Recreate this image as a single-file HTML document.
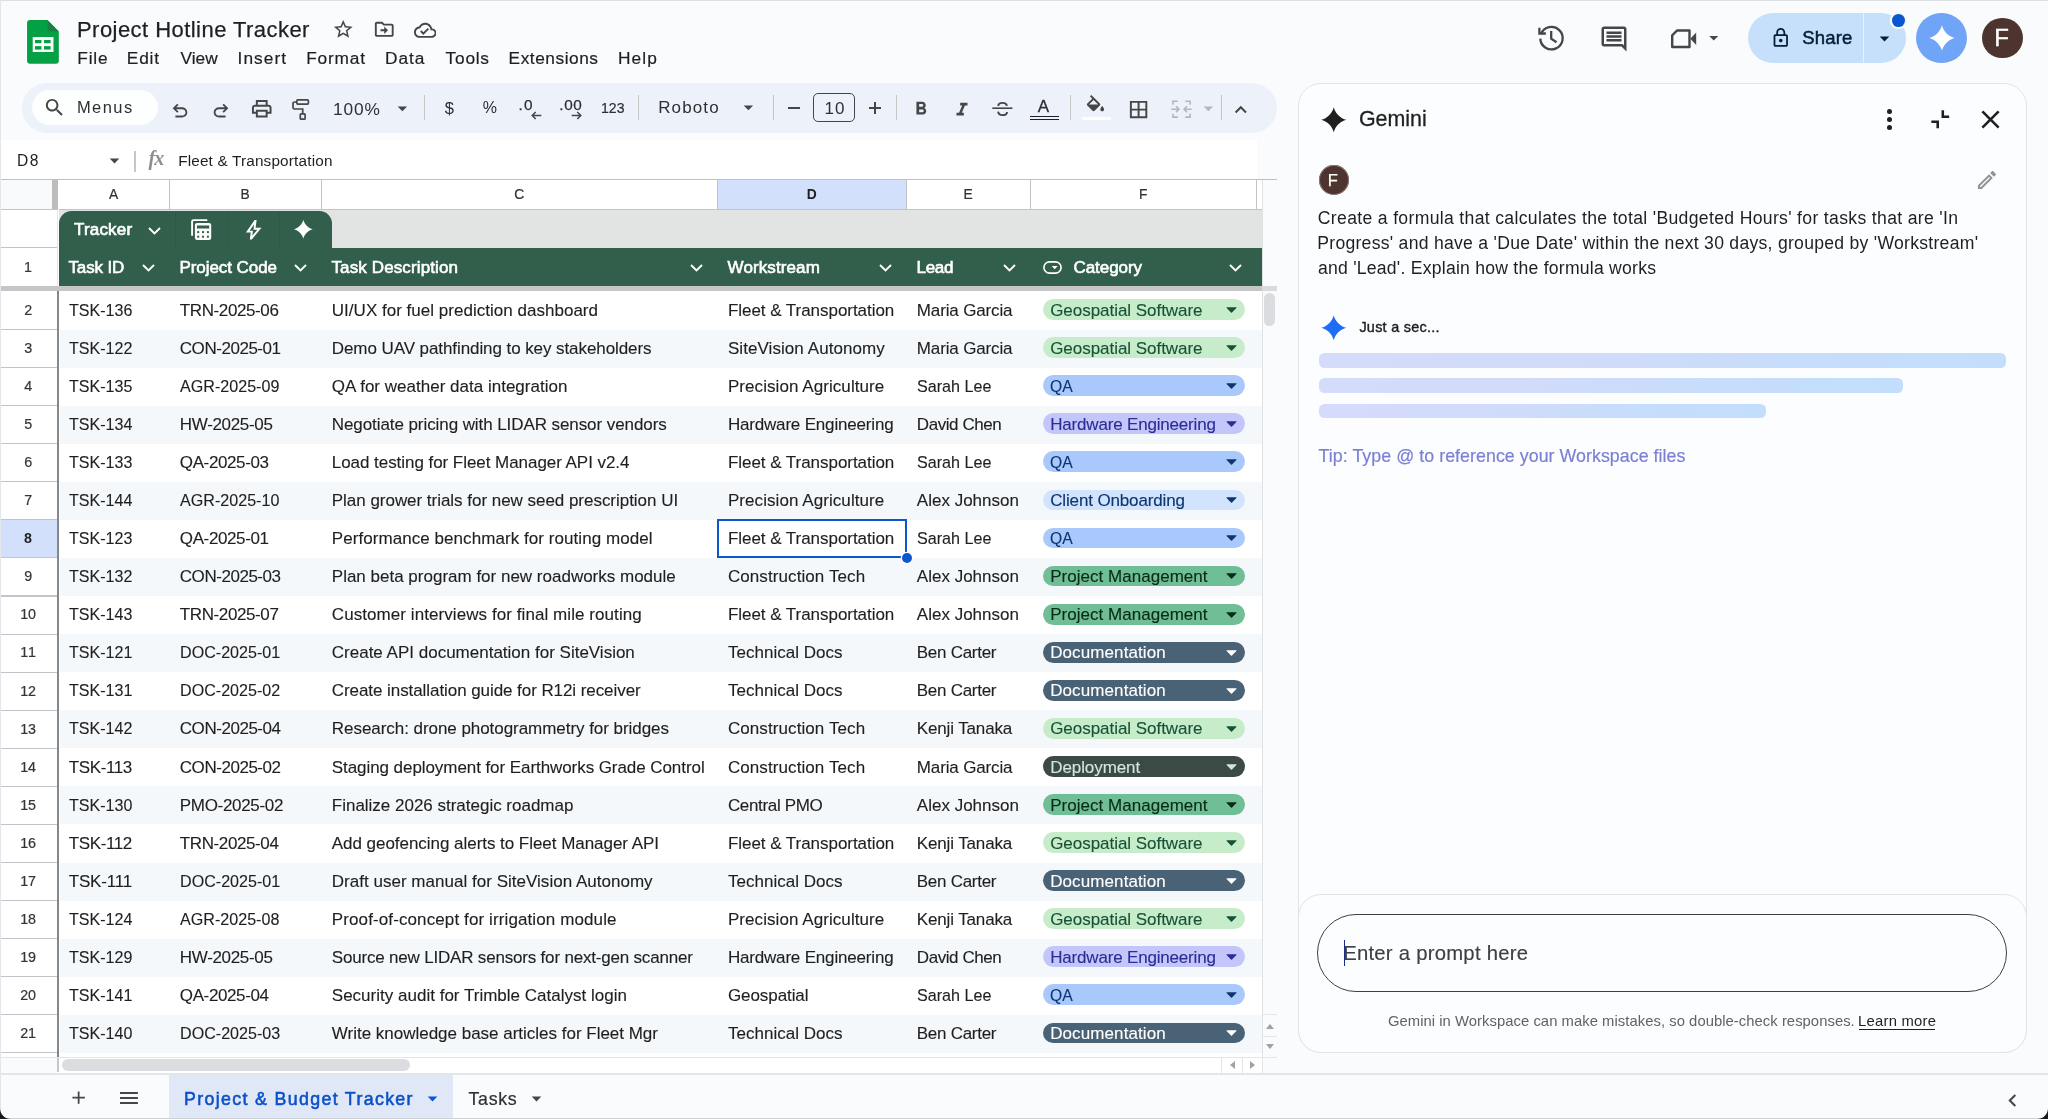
<!DOCTYPE html>
<html lang="en"><head><meta charset="utf-8"><title>Project Hotline Tracker</title>
<style>
html,body{margin:0;padding:0}
body{width:2048px;height:1119px;position:relative;overflow:hidden;background:#f9fbfd;font-family:"Liberation Sans",sans-serif}
.t{position:absolute;white-space:nowrap;line-height:1}
#w{position:absolute;left:0;top:0;width:2048px;height:1119px;will-change:transform}
.b{position:absolute;display:block}
</style></head>
<body>
<div id="w">
<svg class="b" style="left:27.300px;top:19.900px" width="31.900" height="43.700" viewBox="0 0 32 44"><path d="M3 0h17.500L32 11.500V41a3 3 0 0 1-3 3H3a3 3 0 0 1-3-3V3a3 3 0 0 1 3-3z" fill="#06a044"/><path d="M20.500 0L32 11.500h-9a2.500 2.500 0 0 1-2.500-2.500z" fill="#188245"/><rect x="5.700" y="17.200" width="20.900" height="15" fill="#fff"/><rect x="8" y="20.100" width="6.500" height="3.300" fill="#06a044"/><rect x="17.100" y="20.100" width="6.600" height="3.300" fill="#06a044"/><rect x="8" y="26.300" width="6.500" height="3.500" fill="#06a044"/><rect x="17.100" y="26.300" width="6.600" height="3.500" fill="#06a044"/></svg>
<span class="t" style="left:77px;top:19px;font-size:22px;color:#1f1f1f;letter-spacing:0.45px;-webkit-text-stroke:0.25px #1f1f1f;">Project Hotline Tracker</span>
<svg class="b" style="left:332.45px;top:18.35px;" width="22.5" height="22.5" viewBox="0 0 24 24" fill="#444746"><path d="M22 9.24l-7.19-.62L12 2 9.19 8.63 2 9.24l5.46 4.73L5.82 21 12 17.27 18.18 21l-1.63-7.03L22 9.24zM12 15.4l-3.76 2.27 1-4.28-3.32-2.88 4.38-.38L12 6.1l1.71 4.04 4.38.38-3.32 2.88 1 4.28L12 15.4z" /></svg>
<svg class="b" style="left:373.15px;top:18.35px;" width="22.5" height="22.5" viewBox="0 0 24 24" fill="#444746"><path d="M20 6h-8l-2-2H4c-1.1 0-1.99.9-1.99 2L2 18c0 1.1.9 2 2 2h16c1.1 0 2-.9 2-2V8c0-1.1-.9-2-2-2zm0 12H4V6h5.17l2 2H20v10zm-8-1l4-4-4-4v3H8v2h4v3z" /></svg>
<svg class="b" style="left:413.75px;top:18.55px;" width="22.5" height="22.5" viewBox="0 0 24 24" fill="#444746"><path d="M19.35 10.04C18.67 6.59 15.64 4 12 4 9.11 4 6.6 5.64 5.35 8.04 2.34 8.36 0 10.91 0 14c0 3.31 2.69 6 6 6h13c2.76 0 5-2.24 5-5 0-2.64-2.05-4.78-4.65-4.96zM19 18H6c-2.21 0-4-1.79-4-4 0-2.05 1.53-3.76 3.56-3.97l1.07-.11.5-.95C8.08 7.14 9.94 6 12 6c2.62 0 4.88 1.86 5.39 4.43l.3 1.5 1.53.11c1.56.1 2.78 1.41 2.78 2.96 0 1.65-1.35 3-3 3zm-9-3.82l-2.09-2.09L6.5 13.5 10 17l6.01-6.01-1.41-1.41z" /></svg>
<span class="t" style="left:77.18px;top:50px;font-size:17.3px;color:#1f1f1f;letter-spacing:0.9px;-webkit-text-stroke:0.2px #1f1f1f;">File</span>
<span class="t" style="left:126.78px;top:50px;font-size:17.3px;color:#1f1f1f;letter-spacing:0.85px;-webkit-text-stroke:0.2px #1f1f1f;">Edit</span>
<span class="t" style="left:180.42px;top:50px;font-size:17.3px;color:#1f1f1f;letter-spacing:0.02px;-webkit-text-stroke:0.2px #1f1f1f;">View</span>
<span class="t" style="left:237.6px;top:50px;font-size:17.3px;color:#1f1f1f;letter-spacing:1.05px;-webkit-text-stroke:0.2px #1f1f1f;">Insert</span>
<span class="t" style="left:306.18px;top:50px;font-size:17.3px;color:#1f1f1f;letter-spacing:0.83px;-webkit-text-stroke:0.2px #1f1f1f;">Format</span>
<span class="t" style="left:385.08px;top:50px;font-size:17.3px;color:#1f1f1f;letter-spacing:0.96px;-webkit-text-stroke:0.2px #1f1f1f;">Data</span>
<span class="t" style="left:445.61px;top:50px;font-size:17.3px;color:#1f1f1f;letter-spacing:0.76px;-webkit-text-stroke:0.2px #1f1f1f;">Tools</span>
<span class="t" style="left:508.58px;top:50px;font-size:17.3px;color:#1f1f1f;letter-spacing:0.54px;-webkit-text-stroke:0.2px #1f1f1f;">Extensions</span>
<span class="t" style="left:617.88px;top:50px;font-size:17.3px;color:#1f1f1f;letter-spacing:1.16px;-webkit-text-stroke:0.2px #1f1f1f;">Help</span>
<svg class="b" style="left:1536px;top:23px" width="30" height="30" viewBox="0 0 30 30" fill="none" stroke="#444746" stroke-width="2.300"><path d="M5.100 11A11.200 11.200 0 1 1 4.300 15.600"/><path d="M3.400 4.700v5.800h6.500"/><path d="M15.200 8v7.600l5.300 3.600"/></svg>
<svg class="b" style="left:1599.4px;top:23.5px;" width="30" height="30" viewBox="0 0 24 24" fill="#444746"><path d="M21.99 4c0-1.1-.89-2-1.99-2H4c-1.1 0-2 .9-2 2v12c0 1.1.9 2 2 2h14l4 4-.01-18zM20 4v13.17L18.83 16H4V4h16zM6 12h12v2H6zm0-3h12v2H6zm0-3h12v2H6z" /></svg>
<svg class="b" style="left:1668px;top:26px" width="30" height="25" viewBox="0 0 30 25"><path d="M9 4.500h12.500V21H4.200V9.300z" fill="none" stroke="#444746" stroke-width="2.400" stroke-linejoin="round"/><path d="M22.300 12.700l5.900-6.200v12.400z" fill="#444746"/></svg>
<svg class="b" style="left:1702.95px;top:26.65px;" width="21.5" height="21.5" viewBox="0 0 24 24" fill="#444746"><path d="M7 10l5 5 5-5z" /></svg>
<div class="b" style="left:1747.8px;top:12.8px;width:158.1px;height:50.4px;background:#c6e0fb;border-radius:25.200px;"></div>
<div class="b" style="left:1863px;top:12.8px;width:1.2px;height:50.4px;background:#e6f1fd;"></div>
<svg class="b" style="left:1770.15px;top:26.6px;" width="21.5" height="21.5" viewBox="0 0 24 24" fill="#041e36"><path d="M18 8h-1V6c0-2.76-2.24-5-5-5S7 3.24 7 6v2H6c-1.1 0-2 .9-2 2v10c0 1.1.9 2 2 2h12c1.1 0 2-.9 2-2V10c0-1.1-.9-2-2-2zM9 6c0-1.66 1.34-3 3-3s3 1.34 3 3v2H9V6zm9 14H6V10h12v10zm-6-3c1.1 0 2-.9 2-2s-.9-2-2-2-2 .9-2 2 .9 2 2 2z" /></svg>
<span class="t" style="left:1802.36px;top:29px;font-size:18.5px;color:#041e36;letter-spacing:0.17px;-webkit-text-stroke:0.5px #041e36;">Share</span>
<svg class="b" style="left:1872.9px;top:26.9px;" width="23" height="23" viewBox="0 0 24 24" fill="#041e36"><path d="M7 10l5 5 5-5z" /></svg>
<div class="b" style="left:1891.800px;top:13.900px;width:12.800px;height:12.800px;border-radius:50%;background:#0b57d0;box-shadow:0 0 0 2.200px #f6f9fd"></div>
<div class="b" style="left:1916.300px;top:13px;width:50.300px;height:50.300px;border-radius:50%;background:#6fa4f6"></div>
<svg class="b" style="left:1927.55px;top:24.35px;" width="27.9" height="27.9" viewBox="0 0 24 24" fill="#fff"><path d="M12 1C13.200 6.200 17.800 10.800 23 12 17.800 13.200 13.200 17.800 12 23 10.800 17.800 6.200 13.200 1 12 6.200 10.800 10.800 6.200 12 1Z" /></svg>
<div class="b" style="left:1982.100px;top:17.700px;width:40.600px;height:40.600px;border-radius:50%;background:#4e342e"></div>
<span class="t" style="left:1994.13px;top:26px;font-size:24px;color:#fff;-webkit-text-stroke:0.4px #fff;">F</span>
<div class="b" style="left:22px;top:82.5px;width:1254.5px;height:50.5px;background:#edf2fa;border-radius:25.5px;"></div>
<div class="b" style="left:31.5px;top:90.2px;width:126.5px;height:35px;background:#fdfefe;border-radius:17.5px;"></div>
<svg class="b" style="left:43.15px;top:96.05px;" width="23.1" height="23.1" viewBox="0 0 24 24" fill="#444746"><path d="M15.5 14h-.79l-.28-.27C15.41 12.59 16 11.11 16 9.5 16 5.91 13.09 3 9.5 3S3 5.91 3 9.5 5.91 16 9.5 16c1.61 0 3.09-.59 4.23-1.57l.27.28v.79l5 4.99L20.49 19l-4.99-5zm-6 0C7.01 14 5 11.99 5 9.5S7.01 5 9.5 5 14 7.01 14 9.5 11.99 14 9.5 14z" /></svg>
<span class="t" style="left:76.95px;top:99px;font-size:16.5px;color:#2d2f31;letter-spacing:1.43px;">Menus</span>
<svg class="b" style="left:169.3px;top:99.6px;" width="22" height="22" viewBox="0 0 24 24" fill="#444746"><path d="M7 19v-2h7.1q1.575 0 2.738-1T18 13.5t-1.162-2.5T14.1 10H7.8l2.6 2.6L9 14 4 9l5-5 1.4 1.4L7.8 8h6.3q2.425 0 4.163 1.575T20 13.5t-1.737 3.925T14.1 19z" /></svg>
<svg class="b" style="left:209.6px;top:99.6px;transform:scaleX(-1);" width="22" height="22" viewBox="0 0 24 24" fill="#444746"><path d="M7 19v-2h7.1q1.575 0 2.738-1T18 13.5t-1.162-2.5T14.1 10H7.8l2.6 2.6L9 14 4 9l5-5 1.4 1.4L7.8 8h6.3q2.425 0 4.163 1.575T20 13.5t-1.737 3.925T14.1 19z" /></svg>
<svg class="b" style="left:249.65px;top:97.25px;" width="23.5" height="23.5" viewBox="0 0 24 24" fill="#444746"><path d="M19 8h-1V3H6v5H5c-1.66 0-3 1.34-3 3v6h4v4h12v-4h4v-6c0-1.66-1.34-3-3-3zM8 5h8v3H8V5zm8 14H8v-4h8v4zm2-4v-2H6v2H4v-4c0-.55.45-1 1-1h14c.55 0 1 .45 1 1v4h-2z" /></svg>
<svg class="b" style="left:290px;top:97px" width="22" height="25" viewBox="0 0 22 25" fill="none" stroke="#444746" stroke-width="1.700"><rect x="6.800" y="2.900" width="11.600" height="4.200" rx="1"/><path d="M6.800 5H4.600a1.600 1.600 0 0 0-1.600 1.600v3.800A1.600 1.600 0 0 0 4.600 12h8.100v4.600"/><rect x="10.300" y="16.800" width="4.800" height="5.400" rx=".8"/></svg>
<span class="t" style="left:333.08px;top:101px;font-size:17.3px;color:#2d2f31;letter-spacing:0.9px;">100%</span>
<svg class="b" style="left:390.8px;top:96.6px;" width="22.8" height="22.8" viewBox="0 0 24 24" fill="#444746"><path d="M7 10l5 5 5-5z" /></svg>
<div class="b" style="left:423.95px;top:95.3px;width:1.3px;height:25px;background:#c4c7c5;"></div>
<span class="t" style="left:444.71px;top:100px;font-size:16.5px;color:#2d2f31;">$</span>
<span class="t" style="left:482.63px;top:100px;font-size:16px;color:#2d2f31;">%</span>
<span class="t" style="left:518.4px;top:97px;font-size:15.3px;color:#2d2f31;letter-spacing:1.44px;-webkit-text-stroke:0.25px #2d2f31;">.0</span>
<svg class="b" style="left:530.500px;top:110.800px" width="11" height="9" viewBox="0 0 11 9" fill="none" stroke="#444746" stroke-width="1.500"><path d="M10.300 4.500H1.500M4.700 1L1.200 4.500l3.500 3.500"/></svg>
<span class="t" style="left:559.2px;top:97px;font-size:15.3px;color:#2d2f31;letter-spacing:0.71px;-webkit-text-stroke:0.25px #2d2f31;">.00</span>
<svg class="b" style="left:570.500px;top:110.800px" width="11" height="9" viewBox="0 0 11 9" fill="none" stroke="#444746" stroke-width="1.500"><path d="M.7 4.500h8.800M6.300 1l3.500 3.500L6.300 8"/></svg>
<span class="t" style="left:600.64px;top:100px;font-size:15.2px;color:#2d2f31;-webkit-text-stroke:0.2px #2d2f31;transform:scaleX(0.9278);transform-origin:0 0;">123</span>
<div class="b" style="left:638.05px;top:95.3px;width:1.3px;height:25px;background:#c4c7c5;"></div>
<span class="t" style="left:658.21px;top:99px;font-size:17px;color:#2d2f31;letter-spacing:1.12px;">Roboto</span>
<svg class="b" style="left:737.1px;top:95.9px;" width="22.8" height="22.8" viewBox="0 0 24 24" fill="#444746"><path d="M7 10l5 5 5-5z" /></svg>
<div class="b" style="left:772.85px;top:95.3px;width:1.3px;height:25px;background:#c4c7c5;"></div>
<div class="b" style="left:787.7px;top:106.9px;width:12.3px;height:1.7px;background:#444746;"></div>
<div class="b" style="left:813.300px;top:93.300px;width:42.100px;height:29px;border:1.300px solid #444746;border-radius:5px;box-sizing:border-box"></div>
<span class="t" style="left:824.51px;top:100px;font-size:17px;color:#2d2f31;letter-spacing:1.05px;">10</span>
<div class="b" style="left:868.8px;top:107px;width:12.4px;height:1.7px;background:#444746;"></div>
<div class="b" style="left:874.15px;top:101.6px;width:1.7px;height:12.5px;background:#444746;"></div>
<div class="b" style="left:895.75px;top:95.3px;width:1.3px;height:25px;background:#c4c7c5;"></div>
<svg class="b" style="left:909.9px;top:98.4px;" width="22" height="22" viewBox="0 0 24 24" fill="#444746"><path d="M15.6 10.79c.97-.67 1.65-1.77 1.65-2.79 0-2.26-1.75-4-4-4H7v14h7.04c2.09 0 3.71-1.7 3.71-3.79 0-1.52-.86-2.82-2.15-3.42zM10 6.5h3c.83 0 1.5.67 1.5 1.5s-.67 1.5-1.5 1.5h-3v-3zm3.5 9H10v-3h3.5c.83 0 1.5.67 1.5 1.5s-.67 1.5-1.5 1.5z" /></svg>
<svg class="b" style="left:951px;top:98.9px;" width="22" height="22" viewBox="0 0 24 24" fill="#444746"><path d="M10 4v3h2.21l-3.42 8H6v3h8v-3h-2.21l3.42-8H18V4z" /></svg>
<svg class="b" style="left:992px;top:101px" width="21" height="16" viewBox="0 0 21 16" fill="none" stroke="#444746" stroke-width="1.900"><path d="M14.900 4.800C14.600 2.900 13 1.900 10.600 1.900 8 1.900 6.300 3 6.300 4.900"/><path d="M6.100 10.700c.2 2.200 1.900 3.400 4.500 3.400 2.700 0 4.400-1.200 4.400-3.200"/><path d="M.3 7.200h20.100" stroke-width="1.600"/></svg>
<span class="t" style="left:1037.73px;top:98px;font-size:17px;color:#2d2f31;-webkit-text-stroke:0.3px #2d2f31;">A</span>
<div class="b" style="left:1030px;top:115.6px;width:28.9px;height:1.6px;background:#1f1f1f;"></div>
<div class="b" style="left:1030px;top:118.7px;width:28.9px;height:1.6px;background:#1f1f1f;"></div>
<div class="b" style="left:1069.75px;top:95.3px;width:1.3px;height:25px;background:#c4c7c5;"></div>
<svg class="b" style="left:1084px;top:95.1px;" width="23" height="23" viewBox="0 0 24 24" fill="#444746"><path d="M16.56 8.94L7.62 0 6.21 1.41l2.38 2.38-5.15 5.15c-.59.59-.59 1.54 0 2.12l5.5 5.5c.29.29.68.44 1.06.44s.77-.15 1.06-.44l5.5-5.5c.59-.58.59-1.53 0-2.12zM5.21 10L10 5.21 14.79 10H5.21zM19 11.5s-2 2.17-2 3.5c0 1.1.9 2 2 2s2-.9 2-2c0-1.33-2-3.5-2-3.5z" /></svg>
<div class="b" style="left:1082px;top:116.6px;width:28.5px;height:3.8px;background:#fdfefe;"></div>
<svg class="b" style="left:1126.9px;top:97.6px;" width="23.2" height="23.2" viewBox="0 0 24 24" fill="#444746"><path d="M3 3v18h18V3H3zm8 16H5v-6h6v6zm0-8H5V5h6v6zm8 8h-6v-6h6v6zm0-8h-6V5h6v6z" /></svg>
<svg class="b" style="left:1170.700px;top:100px" width="21" height="18.500" viewBox="0 0 21 18.500" fill="none" stroke="#b3b7bb" stroke-width="1.600"><path d="M6.800 1.300H1.900v3.400M1.900 13.700v3.400h4.900M14.200 1.300h4.900v3.400M19.100 13.700v3.400h-4.900"/><path d="M.3 9.200h7.300M5 6.300l2.900 2.900L5 12.100M20.700 9.200h-7.300M16 6.300l-2.900 2.900 2.900 2.900"/></svg>
<svg class="b" style="left:1196.6px;top:96.9px;" width="22.8" height="22.8" viewBox="0 0 24 24" fill="#b3b7bb"><path d="M7 10l5 5 5-5z" /></svg>
<div class="b" style="left:1220.65px;top:95.3px;width:1.3px;height:25px;background:#c4c7c5;"></div>
<svg class="b" style="left:1229.2px;top:97.6px;" width="23.6" height="23.6" viewBox="0 0 24 24" fill="#444746"><path d="M12 8l-6 6 1.41 1.41L12 10.83l4.59 4.58L18 14z" /></svg>
<div class="b" style="left:0px;top:140.3px;width:1257.2px;height:39.2px;background:#fff;"></div>
<span class="t" style="left:17.02px;top:153px;font-size:15.6px;color:#1f1f1f;letter-spacing:1.52px;">D8</span>
<svg class="b" style="left:102.7px;top:149.1px;" width="23" height="23" viewBox="0 0 24 24" fill="#444746"><path d="M7 10l5 5 5-5z" /></svg>
<div class="b" style="left:134.4px;top:151.3px;width:1.3px;height:20.5px;background:#c7c7c7;"></div>
<span class="t" style="left:148.600px;top:148px;font-size:20px;color:#8a8f94;font-family:'Liberation Serif',serif;font-style:italic;font-weight:700;letter-spacing:-1px">fx</span>
<span class="t" style="left:178.14px;top:153px;font-size:15.3px;color:#1f1f1f;letter-spacing:0.18px;">Fleet &amp; Transportation</span>
<div class="b" style="left:0px;top:179px;width:1276.5px;height:895px;background:#fff;"></div>
<div class="b" style="left:0px;top:179px;width:1276.5px;height:1.2px;background:#bdbfc2;"></div>
<div class="b" style="left:0px;top:180px;width:52px;height:29.5px;background:#f8fafc;"></div>
<div class="b" style="left:52.2px;top:180px;width:5.8px;height:29.5px;background:#bdbdbd;"></div>
<div class="b" style="left:169px;top:180px;width:1.2px;height:29.5px;background:#c2c5c8;"></div>
<span class="t" style="left:109.1px;top:188px;font-size:13.8px;color:#2f3133;-webkit-text-stroke:0.2px #2f3133;">A</span>
<div class="b" style="left:321px;top:180px;width:1.2px;height:29.5px;background:#c2c5c8;"></div>
<span class="t" style="left:240.6px;top:188px;font-size:13.8px;color:#2f3133;-webkit-text-stroke:0.2px #2f3133;">B</span>
<div class="b" style="left:717.1px;top:180px;width:1.2px;height:29.5px;background:#c2c5c8;"></div>
<span class="t" style="left:514.27px;top:188px;font-size:13.8px;color:#2f3133;-webkit-text-stroke:0.2px #2f3133;">C</span>
<div class="b" style="left:717.6px;top:180px;width:188.9px;height:29.5px;background:#d3e0fb;"></div>
<div class="b" style="left:906px;top:180px;width:1.2px;height:29.5px;background:#c2c5c8;"></div>
<span class="t" style="left:806.77px;top:188px;font-size:13.8px;color:#1f1f1f;font-weight:700;">D</span>
<div class="b" style="left:1030px;top:180px;width:1.2px;height:29.5px;background:#c2c5c8;"></div>
<span class="t" style="left:963.6px;top:188px;font-size:13.8px;color:#2f3133;-webkit-text-stroke:0.2px #2f3133;">E</span>
<div class="b" style="left:1256px;top:180px;width:1.2px;height:29.5px;background:#c2c5c8;"></div>
<span class="t" style="left:1138.99px;top:188px;font-size:13.8px;color:#2f3133;-webkit-text-stroke:0.2px #2f3133;">F</span>
<div class="b" style="left:1262px;top:180px;width:14.5px;height:894px;background:#f9fbfd;"></div>
<div class="b" style="left:1261.5px;top:180px;width:1px;height:877px;background:#dfe1e4;"></div>
<div class="b" style="left:58.5px;top:209.2px;width:1203px;height:1.2px;background:#c2c5c8;"></div>
<div class="b" style="left:58.5px;top:210.4px;width:1203px;height:37.6px;background:#e2e4e3;"></div>
<div class="b" style="left:0px;top:209.2px;width:57.5px;height:1.1px;background:#c2c5c8;"></div>
<div class="b" style="left:0px;top:247.2px;width:57.5px;height:1.1px;background:#c2c5c8;"></div>
<span class="t" style="left:24.12px;top:260px;font-size:14.3px;color:#333537;-webkit-text-stroke:0.2px #333537;">1</span>
<div class="b" style="left:58.5px;top:211px;width:273px;height:38px;background:#315f4b;border-radius:12.500px 12.500px 0 0;"></div>
<div class="b" style="left:174.5px;top:212px;width:1.2px;height:36px;background:#2b5a47;"></div>
<div class="b" style="left:226.7px;top:212px;width:1.2px;height:36px;background:#2b5a47;"></div>
<div class="b" style="left:278.8px;top:212px;width:1.2px;height:36px;background:#2b5a47;"></div>
<span class="t" style="left:74.02px;top:221px;font-size:17px;color:#fff;letter-spacing:0.18px;-webkit-text-stroke:0.65px #fff;">Tracker</span>
<svg class="b" style="left:146.6px;top:226.2px" width="15" height="10" viewBox="0 0 15 10"><path d="M2 2l5.5 5.500L13 2" fill="none" stroke="#fff" stroke-width="1.9"/></svg>
<svg class="b" style="left:190px;top:218px" width="23" height="24" viewBox="0 0 23 24"><path d="M2.100 17.800V3.600a1.500 1.500 0 0 1 1.500-1.500h13.700" fill="none" stroke="#fff" stroke-width="1.900"/><rect x="4.900" y="4.900" width="16.300" height="17.100" rx="2.200" fill="#fff"/><rect x="6.900" y="7.500" width="12.300" height="3" fill="#315f4b"/><rect x="7.2" y="13.1" width="2" height="2" fill="#315f4b"/><rect x="12.05" y="13.1" width="2" height="2" fill="#315f4b"/><rect x="16.9" y="13.1" width="2" height="2" fill="#315f4b"/><rect x="7.2" y="17.7" width="2" height="2" fill="#315f4b"/><rect x="12.05" y="17.7" width="2" height="2" fill="#315f4b"/><rect x="16.9" y="17.7" width="2" height="2" fill="#315f4b"/></svg>
<svg class="b" style="left:241.5px;top:218.1px;" width="23.4" height="23.4" viewBox="0 -960 960 960" fill="#fff"><path d="m422-232 207-248H469l29-227-185 267h139l-30 208ZM320-80l40-280H160l360-520h80l-40 320h240L400-80h-80Z" /></svg>
<svg class="b" style="left:293.25px;top:219.25px;" width="20.7" height="20.7" viewBox="0 0 24 24" fill="#fff"><path d="M12 1C13.200 6.200 17.800 10.800 23 12 17.800 13.200 13.200 17.800 12 23 10.800 17.800 6.200 13.200 1 12 6.200 10.800 10.800 6.200 12 1Z" /></svg>
<div class="b" style="left:58.5px;top:248px;width:1203px;height:38.5px;background:#315f4b;"></div>
<span class="t" style="left:68.5px;top:259px;font-size:17px;color:#fff;letter-spacing:-0.16px;-webkit-text-stroke:0.6px #fff;">Task ID</span>
<svg class="b" style="left:140.8px;top:263.2px" width="15" height="10" viewBox="0 0 15 10"><path d="M2 2l5.5 5.500L13 2" fill="none" stroke="#fff" stroke-width="1.9"/></svg>
<span class="t" style="left:179.5px;top:259px;font-size:17px;color:#fff;letter-spacing:-0.07px;-webkit-text-stroke:0.6px #fff;">Project Code</span>
<svg class="b" style="left:293.2px;top:263.2px" width="15" height="10" viewBox="0 0 15 10"><path d="M2 2l5.5 5.500L13 2" fill="none" stroke="#fff" stroke-width="1.9"/></svg>
<span class="t" style="left:331.5px;top:259px;font-size:17px;color:#fff;letter-spacing:0.12px;-webkit-text-stroke:0.6px #fff;">Task Description</span>
<svg class="b" style="left:688.5px;top:263.2px" width="15" height="10" viewBox="0 0 15 10"><path d="M2 2l5.5 5.500L13 2" fill="none" stroke="#fff" stroke-width="1.9"/></svg>
<span class="t" style="left:727.6px;top:259px;font-size:17px;color:#fff;letter-spacing:0.1px;-webkit-text-stroke:0.6px #fff;">Workstream</span>
<svg class="b" style="left:878px;top:263.2px" width="15" height="10" viewBox="0 0 15 10"><path d="M2 2l5.5 5.500L13 2" fill="none" stroke="#fff" stroke-width="1.9"/></svg>
<span class="t" style="left:916.5px;top:259px;font-size:17px;color:#fff;letter-spacing:-0.28px;-webkit-text-stroke:0.6px #fff;">Lead</span>
<svg class="b" style="left:1002px;top:263.2px" width="15" height="10" viewBox="0 0 15 10"><path d="M2 2l5.5 5.500L13 2" fill="none" stroke="#fff" stroke-width="1.9"/></svg>
<svg class="b" style="left:1042.500px;top:260.500px" width="19" height="13" viewBox="0 0 19 13"><rect x=".9" y=".9" width="17.200" height="11.200" rx="5.600" fill="none" stroke="#fff" stroke-width="1.600"/><path d="M8.700 5l3 3.200 3-3.200z" fill="#fff"/></svg>
<span class="t" style="left:1073.5px;top:259px;font-size:17px;color:#fff;letter-spacing:-0.06px;-webkit-text-stroke:0.6px #fff;">Category</span>
<svg class="b" style="left:1228px;top:263.2px" width="15" height="10" viewBox="0 0 15 10"><path d="M2 2l5.5 5.500L13 2" fill="none" stroke="#fff" stroke-width="1.9"/></svg>
<div class="b" style="left:0px;top:286.4px;width:1276.5px;height:5px;background:#c4c6c8;"></div>
<div class="b" style="left:1262px;top:286.4px;width:14.5px;height:5px;background:#d9dbdd;"></div>
<div class="b" style="left:0px;top:328.97px;width:57.4px;height:1.1px;background:#c2c5c8;"></div>
<span class="t" style="left:24.17px;top:303px;font-size:14.3px;color:#333537;-webkit-text-stroke:0.2px #333537;">2</span>
<span class="t" style="left:68.8px;top:302px;font-size:17px;color:#1f1f1f;-webkit-text-stroke:0.12px #1f1f1f;transform:scaleX(0.9442);transform-origin:0 0;">TSK-136</span>
<span class="t" style="left:179.8px;top:302px;font-size:17px;color:#1f1f1f;letter-spacing:-0.39px;-webkit-text-stroke:0.12px #1f1f1f;">TRN-2025-06</span>
<span class="t" style="left:331.8px;top:302px;font-size:17px;color:#1f1f1f;letter-spacing:0.02px;-webkit-text-stroke:0.12px #1f1f1f;">UI/UX for fuel prediction dashboard</span>
<span class="t" style="left:727.9px;top:302px;font-size:17px;color:#1f1f1f;letter-spacing:-0.04px;-webkit-text-stroke:0.12px #1f1f1f;">Fleet &amp; Transportation</span>
<span class="t" style="left:916.8px;top:302px;font-size:17px;color:#1f1f1f;letter-spacing:-0.14px;-webkit-text-stroke:0.12px #1f1f1f;">Maria Garcia</span>
<div class="b" style="left:1043.2px;top:299.2px;width:201.6px;height:20.8px;background:#c6ecca;border-radius:10.400px;"></div>
<span class="t" style="left:1050.2px;top:302px;font-size:17px;color:#175236;letter-spacing:-0.04px;-webkit-text-stroke:0.12px #175236;">Geospatial Software</span>
<svg class="b" style="left:1225.500px;top:307px" width="11" height="6" viewBox="0 0 11 6"><path d="M.9.300h9.200q.8 0 .3.600L6 5.500q-.5.500-1 0L.6.900Q.1.300.9.300z" fill="#175236"/></svg>
<div class="b" style="left:59.5px;top:329.57px;width:1202px;height:38.07px;background:#f5f8fb;"></div>
<div class="b" style="left:0px;top:367.04px;width:57.4px;height:1.1px;background:#c2c5c8;"></div>
<span class="t" style="left:24.17px;top:341px;font-size:14.3px;color:#333537;-webkit-text-stroke:0.2px #333537;">3</span>
<span class="t" style="left:68.8px;top:340px;font-size:17px;color:#1f1f1f;-webkit-text-stroke:0.12px #1f1f1f;transform:scaleX(0.9442);transform-origin:0 0;">TSK-122</span>
<span class="t" style="left:179.8px;top:340px;font-size:17px;color:#1f1f1f;letter-spacing:-0.46px;-webkit-text-stroke:0.12px #1f1f1f;">CON-2025-01</span>
<span class="t" style="left:331.8px;top:340px;font-size:17px;color:#1f1f1f;letter-spacing:-0.08px;-webkit-text-stroke:0.12px #1f1f1f;">Demo UAV pathfinding to key stakeholders</span>
<span class="t" style="left:727.9px;top:340px;font-size:17px;color:#1f1f1f;letter-spacing:0.07px;-webkit-text-stroke:0.12px #1f1f1f;">SiteVision Autonomy</span>
<span class="t" style="left:916.8px;top:340px;font-size:17px;color:#1f1f1f;letter-spacing:-0.14px;-webkit-text-stroke:0.12px #1f1f1f;">Maria Garcia</span>
<div class="b" style="left:1043.2px;top:337.27px;width:201.6px;height:20.8px;background:#c6ecca;border-radius:10.400px;"></div>
<span class="t" style="left:1050.2px;top:340px;font-size:17px;color:#175236;letter-spacing:-0.04px;-webkit-text-stroke:0.12px #175236;">Geospatial Software</span>
<svg class="b" style="left:1225.500px;top:345.07px" width="11" height="6" viewBox="0 0 11 6"><path d="M.9.300h9.200q.8 0 .3.600L6 5.500q-.5.500-1 0L.6.900Q.1.300.9.300z" fill="#175236"/></svg>
<div class="b" style="left:0px;top:405.11px;width:57.4px;height:1.1px;background:#c2c5c8;"></div>
<span class="t" style="left:24.17px;top:379px;font-size:14.3px;color:#333537;-webkit-text-stroke:0.2px #333537;">4</span>
<span class="t" style="left:68.8px;top:378px;font-size:17px;color:#1f1f1f;-webkit-text-stroke:0.12px #1f1f1f;transform:scaleX(0.9442);transform-origin:0 0;">TSK-135</span>
<span class="t" style="left:179.8px;top:378px;font-size:17px;color:#1f1f1f;-webkit-text-stroke:0.12px #1f1f1f;transform:scaleX(0.9474);transform-origin:0 0;">AGR-2025-09</span>
<span class="t" style="left:331.8px;top:378px;font-size:17px;color:#1f1f1f;letter-spacing:0.01px;-webkit-text-stroke:0.12px #1f1f1f;">QA for weather data integration</span>
<span class="t" style="left:727.9px;top:378px;font-size:17px;color:#1f1f1f;letter-spacing:0.07px;-webkit-text-stroke:0.12px #1f1f1f;">Precision Agriculture</span>
<span class="t" style="left:916.8px;top:378px;font-size:17px;color:#1f1f1f;-webkit-text-stroke:0.12px #1f1f1f;transform:scaleX(0.9494);transform-origin:0 0;">Sarah Lee</span>
<div class="b" style="left:1043.2px;top:375.34px;width:201.6px;height:20.8px;background:#a9c8fb;border-radius:10.400px;"></div>
<span class="t" style="left:1050.2px;top:378px;font-size:17px;color:#0b3672;-webkit-text-stroke:0.12px #0b3672;transform:scaleX(0.9238);transform-origin:0 0;">QA</span>
<svg class="b" style="left:1225.500px;top:383.14px" width="11" height="6" viewBox="0 0 11 6"><path d="M.9.300h9.200q.8 0 .3.600L6 5.500q-.5.500-1 0L.6.900Q.1.300.9.300z" fill="#0b3672"/></svg>
<div class="b" style="left:59.5px;top:405.71px;width:1202px;height:38.07px;background:#f5f8fb;"></div>
<div class="b" style="left:0px;top:443.18px;width:57.4px;height:1.1px;background:#c2c5c8;"></div>
<span class="t" style="left:24.17px;top:417px;font-size:14.3px;color:#333537;-webkit-text-stroke:0.2px #333537;">5</span>
<span class="t" style="left:68.8px;top:416px;font-size:17px;color:#1f1f1f;-webkit-text-stroke:0.12px #1f1f1f;transform:scaleX(0.9442);transform-origin:0 0;">TSK-134</span>
<span class="t" style="left:179.8px;top:416px;font-size:17px;color:#1f1f1f;letter-spacing:-0.33px;-webkit-text-stroke:0.12px #1f1f1f;">HW-2025-05</span>
<span class="t" style="left:331.8px;top:416px;font-size:17px;color:#1f1f1f;letter-spacing:-0.08px;-webkit-text-stroke:0.12px #1f1f1f;">Negotiate pricing with LIDAR sensor vendors</span>
<span class="t" style="left:727.9px;top:416px;font-size:17px;color:#1f1f1f;letter-spacing:-0.18px;-webkit-text-stroke:0.12px #1f1f1f;">Hardware Engineering</span>
<span class="t" style="left:916.8px;top:416px;font-size:17px;color:#1f1f1f;letter-spacing:-0.43px;-webkit-text-stroke:0.12px #1f1f1f;">David Chen</span>
<div class="b" style="left:1043.2px;top:413.41px;width:201.6px;height:20.8px;background:#c4c6fb;border-radius:10.400px;"></div>
<span class="t" style="left:1050.2px;top:416px;font-size:17px;color:#2a2d94;letter-spacing:-0.18px;-webkit-text-stroke:0.12px #2a2d94;">Hardware Engineering</span>
<svg class="b" style="left:1225.500px;top:421.21px" width="11" height="6" viewBox="0 0 11 6"><path d="M.9.300h9.200q.8 0 .3.600L6 5.500q-.5.500-1 0L.6.900Q.1.300.9.300z" fill="#2a2d94"/></svg>
<div class="b" style="left:0px;top:481.25px;width:57.4px;height:1.1px;background:#c2c5c8;"></div>
<span class="t" style="left:24.17px;top:455px;font-size:14.3px;color:#333537;-webkit-text-stroke:0.2px #333537;">6</span>
<span class="t" style="left:68.8px;top:454px;font-size:17px;color:#1f1f1f;-webkit-text-stroke:0.12px #1f1f1f;transform:scaleX(0.9442);transform-origin:0 0;">TSK-133</span>
<span class="t" style="left:179.8px;top:454px;font-size:17px;color:#1f1f1f;letter-spacing:-0.38px;-webkit-text-stroke:0.12px #1f1f1f;">QA-2025-03</span>
<span class="t" style="left:331.8px;top:454px;font-size:17px;color:#1f1f1f;letter-spacing:-0.05px;-webkit-text-stroke:0.12px #1f1f1f;">Load testing for Fleet Manager API v2.4</span>
<span class="t" style="left:727.9px;top:454px;font-size:17px;color:#1f1f1f;letter-spacing:-0.04px;-webkit-text-stroke:0.12px #1f1f1f;">Fleet &amp; Transportation</span>
<span class="t" style="left:916.8px;top:454px;font-size:17px;color:#1f1f1f;-webkit-text-stroke:0.12px #1f1f1f;transform:scaleX(0.9494);transform-origin:0 0;">Sarah Lee</span>
<div class="b" style="left:1043.2px;top:451.48px;width:201.6px;height:20.8px;background:#a9c8fb;border-radius:10.400px;"></div>
<span class="t" style="left:1050.2px;top:454px;font-size:17px;color:#0b3672;-webkit-text-stroke:0.12px #0b3672;transform:scaleX(0.9238);transform-origin:0 0;">QA</span>
<svg class="b" style="left:1225.500px;top:459.28px" width="11" height="6" viewBox="0 0 11 6"><path d="M.9.300h9.200q.8 0 .3.600L6 5.500q-.5.500-1 0L.6.900Q.1.300.9.300z" fill="#0b3672"/></svg>
<div class="b" style="left:59.5px;top:481.85px;width:1202px;height:38.07px;background:#f5f8fb;"></div>
<div class="b" style="left:0px;top:519.32px;width:57.4px;height:1.1px;background:#c2c5c8;"></div>
<span class="t" style="left:24.17px;top:493px;font-size:14.3px;color:#333537;-webkit-text-stroke:0.2px #333537;">7</span>
<span class="t" style="left:68.8px;top:492px;font-size:17px;color:#1f1f1f;-webkit-text-stroke:0.12px #1f1f1f;transform:scaleX(0.9442);transform-origin:0 0;">TSK-144</span>
<span class="t" style="left:179.8px;top:492px;font-size:17px;color:#1f1f1f;-webkit-text-stroke:0.12px #1f1f1f;transform:scaleX(0.9474);transform-origin:0 0;">AGR-2025-10</span>
<span class="t" style="left:331.8px;top:492px;font-size:17px;color:#1f1f1f;letter-spacing:-0.03px;-webkit-text-stroke:0.12px #1f1f1f;">Plan grower trials for new seed prescription UI</span>
<span class="t" style="left:727.9px;top:492px;font-size:17px;color:#1f1f1f;letter-spacing:0.07px;-webkit-text-stroke:0.12px #1f1f1f;">Precision Agriculture</span>
<span class="t" style="left:916.8px;top:492px;font-size:17px;color:#1f1f1f;letter-spacing:0.01px;-webkit-text-stroke:0.12px #1f1f1f;">Alex Johnson</span>
<div class="b" style="left:1043.2px;top:489.55px;width:201.6px;height:20.8px;background:#d2e3fd;border-radius:10.400px;"></div>
<span class="t" style="left:1050.2px;top:492px;font-size:17px;color:#0b3672;letter-spacing:-0.14px;-webkit-text-stroke:0.12px #0b3672;">Client Onboarding</span>
<svg class="b" style="left:1225.500px;top:497.35px" width="11" height="6" viewBox="0 0 11 6"><path d="M.9.300h9.200q.8 0 .3.600L6 5.500q-.5.500-1 0L.6.900Q.1.300.9.300z" fill="#0b3672"/></svg>
<div class="b" style="left:0px;top:519.92px;width:57.4px;height:38.07px;background:#d3e0fb;"></div>
<div class="b" style="left:0px;top:557.39px;width:57.4px;height:1.1px;background:#c2c5c8;"></div>
<span class="t" style="left:24.09px;top:531px;font-size:14.3px;color:#1f1f1f;font-weight:700;">8</span>
<span class="t" style="left:68.8px;top:530px;font-size:17px;color:#1f1f1f;-webkit-text-stroke:0.12px #1f1f1f;transform:scaleX(0.9442);transform-origin:0 0;">TSK-123</span>
<span class="t" style="left:179.8px;top:530px;font-size:17px;color:#1f1f1f;letter-spacing:-0.38px;-webkit-text-stroke:0.12px #1f1f1f;">QA-2025-01</span>
<span class="t" style="left:331.8px;top:530px;font-size:17px;color:#1f1f1f;letter-spacing:0.06px;-webkit-text-stroke:0.12px #1f1f1f;">Performance benchmark for routing model</span>
<span class="t" style="left:727.9px;top:530px;font-size:17px;color:#1f1f1f;letter-spacing:-0.04px;-webkit-text-stroke:0.12px #1f1f1f;">Fleet &amp; Transportation</span>
<span class="t" style="left:916.8px;top:530px;font-size:17px;color:#1f1f1f;-webkit-text-stroke:0.12px #1f1f1f;transform:scaleX(0.9494);transform-origin:0 0;">Sarah Lee</span>
<div class="b" style="left:1043.2px;top:527.62px;width:201.6px;height:20.8px;background:#a9c8fb;border-radius:10.400px;"></div>
<span class="t" style="left:1050.2px;top:530px;font-size:17px;color:#0b3672;-webkit-text-stroke:0.12px #0b3672;transform:scaleX(0.9238);transform-origin:0 0;">QA</span>
<svg class="b" style="left:1225.500px;top:535.42px" width="11" height="6" viewBox="0 0 11 6"><path d="M.9.300h9.200q.8 0 .3.600L6 5.500q-.5.500-1 0L.6.900Q.1.300.9.300z" fill="#0b3672"/></svg>
<div class="b" style="left:59.5px;top:557.99px;width:1202px;height:38.07px;background:#f5f8fb;"></div>
<div class="b" style="left:0px;top:595.46px;width:57.4px;height:1.1px;background:#c2c5c8;"></div>
<span class="t" style="left:24.17px;top:569px;font-size:14.3px;color:#333537;-webkit-text-stroke:0.2px #333537;">9</span>
<span class="t" style="left:68.8px;top:568px;font-size:17px;color:#1f1f1f;-webkit-text-stroke:0.12px #1f1f1f;transform:scaleX(0.9442);transform-origin:0 0;">TSK-132</span>
<span class="t" style="left:179.8px;top:568px;font-size:17px;color:#1f1f1f;letter-spacing:-0.46px;-webkit-text-stroke:0.12px #1f1f1f;">CON-2025-03</span>
<span class="t" style="left:331.8px;top:568px;font-size:17px;color:#1f1f1f;letter-spacing:-0px;-webkit-text-stroke:0.12px #1f1f1f;">Plan beta program for new roadworks module</span>
<span class="t" style="left:727.9px;top:568px;font-size:17px;color:#1f1f1f;letter-spacing:0.09px;-webkit-text-stroke:0.12px #1f1f1f;">Construction Tech</span>
<span class="t" style="left:916.8px;top:568px;font-size:17px;color:#1f1f1f;letter-spacing:0.01px;-webkit-text-stroke:0.12px #1f1f1f;">Alex Johnson</span>
<div class="b" style="left:1043.2px;top:565.69px;width:201.6px;height:20.8px;background:#70be95;border-radius:10.400px;"></div>
<span class="t" style="left:1050.2px;top:568px;font-size:17px;color:#082a18;letter-spacing:0.03px;-webkit-text-stroke:0.12px #082a18;">Project Management</span>
<svg class="b" style="left:1225.500px;top:573.49px" width="11" height="6" viewBox="0 0 11 6"><path d="M.9.300h9.200q.8 0 .3.600L6 5.500q-.5.500-1 0L.6.900Q.1.300.9.300z" fill="#082a18"/></svg>
<div class="b" style="left:0px;top:633.53px;width:57.4px;height:1.1px;background:#c2c5c8;"></div>
<span class="t" style="left:20.25px;top:607px;font-size:14.3px;color:#333537;letter-spacing:-0.2px;-webkit-text-stroke:0.2px #333537;">10</span>
<span class="t" style="left:68.8px;top:606px;font-size:17px;color:#1f1f1f;-webkit-text-stroke:0.12px #1f1f1f;transform:scaleX(0.9442);transform-origin:0 0;">TSK-143</span>
<span class="t" style="left:179.8px;top:606px;font-size:17px;color:#1f1f1f;letter-spacing:-0.39px;-webkit-text-stroke:0.12px #1f1f1f;">TRN-2025-07</span>
<span class="t" style="left:331.8px;top:606px;font-size:17px;color:#1f1f1f;letter-spacing:0.07px;-webkit-text-stroke:0.12px #1f1f1f;">Customer interviews for final mile routing</span>
<span class="t" style="left:727.9px;top:606px;font-size:17px;color:#1f1f1f;letter-spacing:-0.04px;-webkit-text-stroke:0.12px #1f1f1f;">Fleet &amp; Transportation</span>
<span class="t" style="left:916.8px;top:606px;font-size:17px;color:#1f1f1f;letter-spacing:0.01px;-webkit-text-stroke:0.12px #1f1f1f;">Alex Johnson</span>
<div class="b" style="left:1043.2px;top:603.76px;width:201.6px;height:20.8px;background:#70be95;border-radius:10.400px;"></div>
<span class="t" style="left:1050.2px;top:606px;font-size:17px;color:#082a18;letter-spacing:0.03px;-webkit-text-stroke:0.12px #082a18;">Project Management</span>
<svg class="b" style="left:1225.500px;top:611.56px" width="11" height="6" viewBox="0 0 11 6"><path d="M.9.300h9.200q.8 0 .3.600L6 5.500q-.5.500-1 0L.6.900Q.1.300.9.300z" fill="#082a18"/></svg>
<div class="b" style="left:59.5px;top:634.13px;width:1202px;height:38.07px;background:#f5f8fb;"></div>
<div class="b" style="left:0px;top:671.6px;width:57.4px;height:1.1px;background:#c2c5c8;"></div>
<span class="t" style="left:20.25px;top:645px;font-size:14.3px;color:#333537;letter-spacing:0.86px;-webkit-text-stroke:0.2px #333537;">11</span>
<span class="t" style="left:68.8px;top:644px;font-size:17px;color:#1f1f1f;-webkit-text-stroke:0.12px #1f1f1f;transform:scaleX(0.9442);transform-origin:0 0;">TSK-121</span>
<span class="t" style="left:179.8px;top:644px;font-size:17px;color:#1f1f1f;-webkit-text-stroke:0.12px #1f1f1f;transform:scaleX(0.9472);transform-origin:0 0;">DOC-2025-01</span>
<span class="t" style="left:331.8px;top:644px;font-size:17px;color:#1f1f1f;letter-spacing:0px;-webkit-text-stroke:0.12px #1f1f1f;">Create API documentation for SiteVision</span>
<span class="t" style="left:727.9px;top:644px;font-size:17px;color:#1f1f1f;letter-spacing:0.03px;-webkit-text-stroke:0.12px #1f1f1f;">Technical Docs</span>
<span class="t" style="left:916.8px;top:644px;font-size:17px;color:#1f1f1f;letter-spacing:-0.28px;-webkit-text-stroke:0.12px #1f1f1f;">Ben Carter</span>
<div class="b" style="left:1043.2px;top:641.83px;width:201.6px;height:20.8px;background:#4a6276;border-radius:10.400px;"></div>
<span class="t" style="left:1050.2px;top:644px;font-size:17px;color:#ffffff;letter-spacing:0.1px;-webkit-text-stroke:0.12px #ffffff;">Documentation</span>
<svg class="b" style="left:1225.500px;top:649.63px" width="11" height="6" viewBox="0 0 11 6"><path d="M.9.300h9.200q.8 0 .3.600L6 5.500q-.5.500-1 0L.6.900Q.1.300.9.300z" fill="#ffffff"/></svg>
<div class="b" style="left:0px;top:709.67px;width:57.4px;height:1.1px;background:#c2c5c8;"></div>
<span class="t" style="left:20.25px;top:684px;font-size:14.3px;color:#333537;letter-spacing:-0.2px;-webkit-text-stroke:0.2px #333537;">12</span>
<span class="t" style="left:68.8px;top:682px;font-size:17px;color:#1f1f1f;-webkit-text-stroke:0.12px #1f1f1f;transform:scaleX(0.9442);transform-origin:0 0;">TSK-131</span>
<span class="t" style="left:179.8px;top:682px;font-size:17px;color:#1f1f1f;-webkit-text-stroke:0.12px #1f1f1f;transform:scaleX(0.9472);transform-origin:0 0;">DOC-2025-02</span>
<span class="t" style="left:331.8px;top:682px;font-size:17px;color:#1f1f1f;letter-spacing:-0.07px;-webkit-text-stroke:0.12px #1f1f1f;">Create installation guide for R12i receiver</span>
<span class="t" style="left:727.9px;top:682px;font-size:17px;color:#1f1f1f;letter-spacing:0.03px;-webkit-text-stroke:0.12px #1f1f1f;">Technical Docs</span>
<span class="t" style="left:916.8px;top:682px;font-size:17px;color:#1f1f1f;letter-spacing:-0.28px;-webkit-text-stroke:0.12px #1f1f1f;">Ben Carter</span>
<div class="b" style="left:1043.2px;top:679.9px;width:201.6px;height:20.8px;background:#4a6276;border-radius:10.400px;"></div>
<span class="t" style="left:1050.2px;top:682px;font-size:17px;color:#ffffff;letter-spacing:0.1px;-webkit-text-stroke:0.12px #ffffff;">Documentation</span>
<svg class="b" style="left:1225.500px;top:687.7px" width="11" height="6" viewBox="0 0 11 6"><path d="M.9.300h9.200q.8 0 .3.600L6 5.500q-.5.500-1 0L.6.900Q.1.300.9.300z" fill="#ffffff"/></svg>
<div class="b" style="left:59.5px;top:710.27px;width:1202px;height:38.07px;background:#f5f8fb;"></div>
<div class="b" style="left:0px;top:747.74px;width:57.4px;height:1.1px;background:#c2c5c8;"></div>
<span class="t" style="left:20.25px;top:722px;font-size:14.3px;color:#333537;letter-spacing:-0.2px;-webkit-text-stroke:0.2px #333537;">13</span>
<span class="t" style="left:68.8px;top:720px;font-size:17px;color:#1f1f1f;-webkit-text-stroke:0.12px #1f1f1f;transform:scaleX(0.9442);transform-origin:0 0;">TSK-142</span>
<span class="t" style="left:179.8px;top:720px;font-size:17px;color:#1f1f1f;letter-spacing:-0.46px;-webkit-text-stroke:0.12px #1f1f1f;">CON-2025-04</span>
<span class="t" style="left:331.8px;top:720px;font-size:17px;color:#1f1f1f;letter-spacing:-0.05px;-webkit-text-stroke:0.12px #1f1f1f;">Research: drone photogrammetry for bridges</span>
<span class="t" style="left:727.9px;top:720px;font-size:17px;color:#1f1f1f;letter-spacing:0.09px;-webkit-text-stroke:0.12px #1f1f1f;">Construction Tech</span>
<span class="t" style="left:916.8px;top:720px;font-size:17px;color:#1f1f1f;letter-spacing:-0.14px;-webkit-text-stroke:0.12px #1f1f1f;">Kenji Tanaka</span>
<div class="b" style="left:1043.2px;top:717.97px;width:201.6px;height:20.8px;background:#c6ecca;border-radius:10.400px;"></div>
<span class="t" style="left:1050.2px;top:720px;font-size:17px;color:#175236;letter-spacing:-0.04px;-webkit-text-stroke:0.12px #175236;">Geospatial Software</span>
<svg class="b" style="left:1225.500px;top:725.77px" width="11" height="6" viewBox="0 0 11 6"><path d="M.9.300h9.200q.8 0 .3.600L6 5.500q-.5.500-1 0L.6.900Q.1.300.9.300z" fill="#175236"/></svg>
<div class="b" style="left:0px;top:785.81px;width:57.4px;height:1.1px;background:#c2c5c8;"></div>
<span class="t" style="left:20.25px;top:760px;font-size:14.3px;color:#333537;letter-spacing:-0.2px;-webkit-text-stroke:0.2px #333537;">14</span>
<span class="t" style="left:68.8px;top:759px;font-size:17px;color:#1f1f1f;letter-spacing:-0.41px;-webkit-text-stroke:0.12px #1f1f1f;">TSK-113</span>
<span class="t" style="left:179.8px;top:759px;font-size:17px;color:#1f1f1f;letter-spacing:-0.46px;-webkit-text-stroke:0.12px #1f1f1f;">CON-2025-02</span>
<span class="t" style="left:331.8px;top:759px;font-size:17px;color:#1f1f1f;letter-spacing:-0.07px;-webkit-text-stroke:0.12px #1f1f1f;">Staging deployment for Earthworks Grade Control</span>
<span class="t" style="left:727.9px;top:759px;font-size:17px;color:#1f1f1f;letter-spacing:0.09px;-webkit-text-stroke:0.12px #1f1f1f;">Construction Tech</span>
<span class="t" style="left:916.8px;top:759px;font-size:17px;color:#1f1f1f;letter-spacing:-0.14px;-webkit-text-stroke:0.12px #1f1f1f;">Maria Garcia</span>
<div class="b" style="left:1043.2px;top:756.04px;width:201.6px;height:20.8px;background:#3b4a45;border-radius:10.400px;"></div>
<span class="t" style="left:1050.2px;top:759px;font-size:17px;color:#d3e6da;letter-spacing:-0.08px;-webkit-text-stroke:0.12px #d3e6da;">Deployment</span>
<svg class="b" style="left:1225.500px;top:763.84px" width="11" height="6" viewBox="0 0 11 6"><path d="M.9.300h9.200q.8 0 .3.600L6 5.500q-.5.500-1 0L.6.900Q.1.300.9.300z" fill="#d3e6da"/></svg>
<div class="b" style="left:59.5px;top:786.41px;width:1202px;height:38.07px;background:#f5f8fb;"></div>
<div class="b" style="left:0px;top:823.88px;width:57.4px;height:1.1px;background:#c2c5c8;"></div>
<span class="t" style="left:20.25px;top:798px;font-size:14.3px;color:#333537;letter-spacing:-0.2px;-webkit-text-stroke:0.2px #333537;">15</span>
<span class="t" style="left:68.8px;top:797px;font-size:17px;color:#1f1f1f;-webkit-text-stroke:0.12px #1f1f1f;transform:scaleX(0.9442);transform-origin:0 0;">TSK-130</span>
<span class="t" style="left:179.8px;top:797px;font-size:17px;color:#1f1f1f;letter-spacing:-0.32px;-webkit-text-stroke:0.12px #1f1f1f;">PMO-2025-02</span>
<span class="t" style="left:331.8px;top:797px;font-size:17px;color:#1f1f1f;letter-spacing:-0.01px;-webkit-text-stroke:0.12px #1f1f1f;">Finalize 2026 strategic roadmap</span>
<span class="t" style="left:727.9px;top:797px;font-size:17px;color:#1f1f1f;letter-spacing:-0.33px;-webkit-text-stroke:0.12px #1f1f1f;">Central PMO</span>
<span class="t" style="left:916.8px;top:797px;font-size:17px;color:#1f1f1f;letter-spacing:0.01px;-webkit-text-stroke:0.12px #1f1f1f;">Alex Johnson</span>
<div class="b" style="left:1043.2px;top:794.11px;width:201.6px;height:20.8px;background:#70be95;border-radius:10.400px;"></div>
<span class="t" style="left:1050.2px;top:797px;font-size:17px;color:#082a18;letter-spacing:0.03px;-webkit-text-stroke:0.12px #082a18;">Project Management</span>
<svg class="b" style="left:1225.500px;top:801.91px" width="11" height="6" viewBox="0 0 11 6"><path d="M.9.300h9.200q.8 0 .3.600L6 5.500q-.5.500-1 0L.6.900Q.1.300.9.300z" fill="#082a18"/></svg>
<div class="b" style="left:0px;top:861.95px;width:57.4px;height:1.1px;background:#c2c5c8;"></div>
<span class="t" style="left:20.25px;top:836px;font-size:14.3px;color:#333537;letter-spacing:-0.2px;-webkit-text-stroke:0.2px #333537;">16</span>
<span class="t" style="left:68.8px;top:835px;font-size:17px;color:#1f1f1f;letter-spacing:-0.41px;-webkit-text-stroke:0.12px #1f1f1f;">TSK-112</span>
<span class="t" style="left:179.8px;top:835px;font-size:17px;color:#1f1f1f;letter-spacing:-0.39px;-webkit-text-stroke:0.12px #1f1f1f;">TRN-2025-04</span>
<span class="t" style="left:331.8px;top:835px;font-size:17px;color:#1f1f1f;letter-spacing:-0.04px;-webkit-text-stroke:0.12px #1f1f1f;">Add geofencing alerts to Fleet Manager API</span>
<span class="t" style="left:727.9px;top:835px;font-size:17px;color:#1f1f1f;letter-spacing:-0.04px;-webkit-text-stroke:0.12px #1f1f1f;">Fleet &amp; Transportation</span>
<span class="t" style="left:916.8px;top:835px;font-size:17px;color:#1f1f1f;letter-spacing:-0.14px;-webkit-text-stroke:0.12px #1f1f1f;">Kenji Tanaka</span>
<div class="b" style="left:1043.2px;top:832.18px;width:201.6px;height:20.8px;background:#c6ecca;border-radius:10.400px;"></div>
<span class="t" style="left:1050.2px;top:835px;font-size:17px;color:#175236;letter-spacing:-0.04px;-webkit-text-stroke:0.12px #175236;">Geospatial Software</span>
<svg class="b" style="left:1225.500px;top:839.98px" width="11" height="6" viewBox="0 0 11 6"><path d="M.9.300h9.200q.8 0 .3.600L6 5.500q-.5.500-1 0L.6.900Q.1.300.9.300z" fill="#175236"/></svg>
<div class="b" style="left:59.5px;top:862.55px;width:1202px;height:38.07px;background:#f5f8fb;"></div>
<div class="b" style="left:0px;top:900.02px;width:57.4px;height:1.1px;background:#c2c5c8;"></div>
<span class="t" style="left:20.25px;top:874px;font-size:14.3px;color:#333537;letter-spacing:-0.2px;-webkit-text-stroke:0.2px #333537;">17</span>
<span class="t" style="left:68.8px;top:873px;font-size:17px;color:#1f1f1f;letter-spacing:-0.2px;-webkit-text-stroke:0.12px #1f1f1f;">TSK-111</span>
<span class="t" style="left:179.8px;top:873px;font-size:17px;color:#1f1f1f;-webkit-text-stroke:0.12px #1f1f1f;transform:scaleX(0.9472);transform-origin:0 0;">DOC-2025-01</span>
<span class="t" style="left:331.8px;top:873px;font-size:17px;color:#1f1f1f;letter-spacing:0.02px;-webkit-text-stroke:0.12px #1f1f1f;">Draft user manual for SiteVision Autonomy</span>
<span class="t" style="left:727.9px;top:873px;font-size:17px;color:#1f1f1f;letter-spacing:0.03px;-webkit-text-stroke:0.12px #1f1f1f;">Technical Docs</span>
<span class="t" style="left:916.8px;top:873px;font-size:17px;color:#1f1f1f;letter-spacing:-0.28px;-webkit-text-stroke:0.12px #1f1f1f;">Ben Carter</span>
<div class="b" style="left:1043.2px;top:870.25px;width:201.6px;height:20.8px;background:#4a6276;border-radius:10.400px;"></div>
<span class="t" style="left:1050.2px;top:873px;font-size:17px;color:#ffffff;letter-spacing:0.1px;-webkit-text-stroke:0.12px #ffffff;">Documentation</span>
<svg class="b" style="left:1225.500px;top:878.05px" width="11" height="6" viewBox="0 0 11 6"><path d="M.9.300h9.200q.8 0 .3.600L6 5.500q-.5.500-1 0L.6.900Q.1.300.9.300z" fill="#ffffff"/></svg>
<div class="b" style="left:0px;top:938.09px;width:57.4px;height:1.1px;background:#c2c5c8;"></div>
<span class="t" style="left:20.25px;top:912px;font-size:14.3px;color:#333537;letter-spacing:-0.2px;-webkit-text-stroke:0.2px #333537;">18</span>
<span class="t" style="left:68.8px;top:911px;font-size:17px;color:#1f1f1f;-webkit-text-stroke:0.12px #1f1f1f;transform:scaleX(0.9442);transform-origin:0 0;">TSK-124</span>
<span class="t" style="left:179.8px;top:911px;font-size:17px;color:#1f1f1f;-webkit-text-stroke:0.12px #1f1f1f;transform:scaleX(0.9474);transform-origin:0 0;">AGR-2025-08</span>
<span class="t" style="left:331.8px;top:911px;font-size:17px;color:#1f1f1f;letter-spacing:0.11px;-webkit-text-stroke:0.12px #1f1f1f;">Proof-of-concept for irrigation module</span>
<span class="t" style="left:727.9px;top:911px;font-size:17px;color:#1f1f1f;letter-spacing:0.07px;-webkit-text-stroke:0.12px #1f1f1f;">Precision Agriculture</span>
<span class="t" style="left:916.8px;top:911px;font-size:17px;color:#1f1f1f;letter-spacing:-0.14px;-webkit-text-stroke:0.12px #1f1f1f;">Kenji Tanaka</span>
<div class="b" style="left:1043.2px;top:908.32px;width:201.6px;height:20.8px;background:#c6ecca;border-radius:10.400px;"></div>
<span class="t" style="left:1050.2px;top:911px;font-size:17px;color:#175236;letter-spacing:-0.04px;-webkit-text-stroke:0.12px #175236;">Geospatial Software</span>
<svg class="b" style="left:1225.500px;top:916.12px" width="11" height="6" viewBox="0 0 11 6"><path d="M.9.300h9.200q.8 0 .3.600L6 5.500q-.5.500-1 0L.6.900Q.1.300.9.300z" fill="#175236"/></svg>
<div class="b" style="left:59.5px;top:938.69px;width:1202px;height:38.07px;background:#f5f8fb;"></div>
<div class="b" style="left:0px;top:976.16px;width:57.4px;height:1.1px;background:#c2c5c8;"></div>
<span class="t" style="left:20.25px;top:950px;font-size:14.3px;color:#333537;letter-spacing:-0.2px;-webkit-text-stroke:0.2px #333537;">19</span>
<span class="t" style="left:68.8px;top:949px;font-size:17px;color:#1f1f1f;-webkit-text-stroke:0.12px #1f1f1f;transform:scaleX(0.9442);transform-origin:0 0;">TSK-129</span>
<span class="t" style="left:179.8px;top:949px;font-size:17px;color:#1f1f1f;letter-spacing:-0.33px;-webkit-text-stroke:0.12px #1f1f1f;">HW-2025-05</span>
<span class="t" style="left:331.8px;top:949px;font-size:17px;color:#1f1f1f;letter-spacing:-0.19px;-webkit-text-stroke:0.12px #1f1f1f;">Source new LIDAR sensors for next-gen scanner</span>
<span class="t" style="left:727.9px;top:949px;font-size:17px;color:#1f1f1f;letter-spacing:-0.18px;-webkit-text-stroke:0.12px #1f1f1f;">Hardware Engineering</span>
<span class="t" style="left:916.8px;top:949px;font-size:17px;color:#1f1f1f;letter-spacing:-0.43px;-webkit-text-stroke:0.12px #1f1f1f;">David Chen</span>
<div class="b" style="left:1043.2px;top:946.39px;width:201.6px;height:20.8px;background:#c4c6fb;border-radius:10.400px;"></div>
<span class="t" style="left:1050.2px;top:949px;font-size:17px;color:#2a2d94;letter-spacing:-0.18px;-webkit-text-stroke:0.12px #2a2d94;">Hardware Engineering</span>
<svg class="b" style="left:1225.500px;top:954.19px" width="11" height="6" viewBox="0 0 11 6"><path d="M.9.300h9.200q.8 0 .3.600L6 5.500q-.5.500-1 0L.6.900Q.1.300.9.300z" fill="#2a2d94"/></svg>
<div class="b" style="left:0px;top:1014.23px;width:57.4px;height:1.1px;background:#c2c5c8;"></div>
<span class="t" style="left:20.25px;top:988px;font-size:14.3px;color:#333537;letter-spacing:-0.2px;-webkit-text-stroke:0.2px #333537;">20</span>
<span class="t" style="left:68.8px;top:987px;font-size:17px;color:#1f1f1f;-webkit-text-stroke:0.12px #1f1f1f;transform:scaleX(0.9442);transform-origin:0 0;">TSK-141</span>
<span class="t" style="left:179.8px;top:987px;font-size:17px;color:#1f1f1f;letter-spacing:-0.38px;-webkit-text-stroke:0.12px #1f1f1f;">QA-2025-04</span>
<span class="t" style="left:331.8px;top:987px;font-size:17px;color:#1f1f1f;letter-spacing:0.01px;-webkit-text-stroke:0.12px #1f1f1f;">Security audit for Trimble Catalyst login</span>
<span class="t" style="left:727.9px;top:987px;font-size:17px;color:#1f1f1f;letter-spacing:-0.07px;-webkit-text-stroke:0.12px #1f1f1f;">Geospatial</span>
<span class="t" style="left:916.8px;top:987px;font-size:17px;color:#1f1f1f;-webkit-text-stroke:0.12px #1f1f1f;transform:scaleX(0.9494);transform-origin:0 0;">Sarah Lee</span>
<div class="b" style="left:1043.2px;top:984.46px;width:201.6px;height:20.8px;background:#a9c8fb;border-radius:10.400px;"></div>
<span class="t" style="left:1050.2px;top:987px;font-size:17px;color:#0b3672;-webkit-text-stroke:0.12px #0b3672;transform:scaleX(0.9238);transform-origin:0 0;">QA</span>
<svg class="b" style="left:1225.500px;top:992.26px" width="11" height="6" viewBox="0 0 11 6"><path d="M.9.300h9.200q.8 0 .3.600L6 5.500q-.5.500-1 0L.6.900Q.1.300.9.300z" fill="#0b3672"/></svg>
<div class="b" style="left:59.5px;top:1014.83px;width:1202px;height:38.07px;background:#f5f8fb;"></div>
<div class="b" style="left:0px;top:1052.3px;width:57.4px;height:1.1px;background:#c2c5c8;"></div>
<span class="t" style="left:20.25px;top:1026px;font-size:14.3px;color:#333537;letter-spacing:-0.2px;-webkit-text-stroke:0.2px #333537;">21</span>
<span class="t" style="left:68.8px;top:1025px;font-size:17px;color:#1f1f1f;-webkit-text-stroke:0.12px #1f1f1f;transform:scaleX(0.9442);transform-origin:0 0;">TSK-140</span>
<span class="t" style="left:179.8px;top:1025px;font-size:17px;color:#1f1f1f;-webkit-text-stroke:0.12px #1f1f1f;transform:scaleX(0.9472);transform-origin:0 0;">DOC-2025-03</span>
<span class="t" style="left:331.8px;top:1025px;font-size:17px;color:#1f1f1f;letter-spacing:-0.01px;-webkit-text-stroke:0.12px #1f1f1f;">Write knowledge base articles for Fleet Mgr</span>
<span class="t" style="left:727.9px;top:1025px;font-size:17px;color:#1f1f1f;letter-spacing:0.03px;-webkit-text-stroke:0.12px #1f1f1f;">Technical Docs</span>
<span class="t" style="left:916.8px;top:1025px;font-size:17px;color:#1f1f1f;letter-spacing:-0.28px;-webkit-text-stroke:0.12px #1f1f1f;">Ben Carter</span>
<div class="b" style="left:1043.2px;top:1022.53px;width:201.6px;height:20.8px;background:#4a6276;border-radius:10.400px;"></div>
<span class="t" style="left:1050.2px;top:1025px;font-size:17px;color:#ffffff;letter-spacing:0.1px;-webkit-text-stroke:0.12px #ffffff;">Documentation</span>
<svg class="b" style="left:1225.500px;top:1030.33px" width="11" height="6" viewBox="0 0 11 6"><path d="M.9.300h9.200q.8 0 .3.600L6 5.500q-.5.500-1 0L.6.900Q.1.300.9.300z" fill="#ffffff"/></svg>
<div class="b" style="left:0px;top:1057.6px;width:57.4px;height:16px;background:#f9fbfd;"></div>
<div class="b" style="left:57.4px;top:291.4px;width:2.1px;height:765.4px;background:#858789;"></div>
<div class="b" style="left:57.4px;top:1057px;width:2.1px;height:14.8px;background:#c6c8ca;"></div>
<div class="b" style="left:57.4px;top:210.4px;width:1.1px;height:76px;background:#e4e6e5;"></div>
<div class="b" style="left:717px;top:518.900px;width:190.300px;height:39px;border:2.300px solid #0b57d0;box-sizing:border-box"></div>
<div class="b" style="left:902.200px;top:553px;width:10px;height:10px;border-radius:50%;background:#0b57d0;box-shadow:0 0 0 1.200px #fff"></div>
<div class="b" style="left:0px;top:1057px;width:1276.5px;height:1.1px;background:#e3e5e8;"></div>
<div class="b" style="left:61.5px;top:1059.3px;width:348px;height:11.3px;background:#dadce0;border-radius:6px;"></div>
<div class="b" style="left:57.4px;top:1040px;width:2.1px;height:16.8px;background:#858789;"></div>
<div class="b" style="left:1264.3px;top:292.6px;width:10.7px;height:33.5px;background:#dadce0;border-radius:5.500px;"></div>
<svg class="b" style="left:1265.500px;top:1022.500px" width="8" height="6" viewBox="0 0 8 6"><path d="M0 6h8L4 1z" fill="#9ea2a7"/></svg>
<svg class="b" style="left:1265.500px;top:1044px" width="8" height="6" viewBox="0 0 8 6"><path d="M0 0h8L4 5z" fill="#9ea2a7"/></svg>
<div class="b" style="left:1262px;top:1014px;width:14.5px;height:1px;background:#e3e5e8;"></div>
<div class="b" style="left:1262px;top:1035.5px;width:14.5px;height:1px;background:#e3e5e8;"></div>
<svg class="b" style="left:1228.500px;top:1060.500px" width="6" height="8" viewBox="0 0 6 8"><path d="M6 0v8L1 4z" fill="#9ea2a7"/></svg>
<svg class="b" style="left:1250px;top:1060.500px" width="6" height="8" viewBox="0 0 6 8"><path d="M0 0v8l5-4z" fill="#9ea2a7"/></svg>
<div class="b" style="left:1221px;top:1058px;width:1px;height:15.5px;background:#e3e5e8;"></div>
<div class="b" style="left:1241.5px;top:1058px;width:1px;height:15.5px;background:#e3e5e8;"></div>
<div class="b" style="left:1262px;top:1058px;width:1px;height:15.5px;background:#e3e5e8;"></div>
<div class="b" style="left:0px;top:1072.9px;width:2048px;height:2px;background:#e2e5e9;"></div>
<div class="b" style="left:0px;top:1074.7px;width:2048px;height:45px;background:#f9fbfd;"></div>
<svg class="b" style="left:67.55px;top:1087.35px;" width="21.3" height="21.3" viewBox="0 0 24 24" fill="#444746"><path d="M19 13h-6v6h-2v-6H5v-2h6V5h2v6h6v2z" /></svg>
<svg class="b" style="left:117.05px;top:1086.05px;" width="23.9" height="23.9" viewBox="0 0 24 24" fill="#444746"><path d="M3 18h18v-2H3v2zm0-5h18v-2H3v2zm0-7v2h18V6H3z" /></svg>
<div class="b" style="left:169.4px;top:1074.9px;width:283.4px;height:45px;background:#e0e8f8;"></div>
<span class="t" style="left:184.04px;top:1091px;font-size:17.8px;color:#0b50c8;letter-spacing:1.34px;-webkit-text-stroke:0.55px #0b50c8;">Project &amp; Budget Tracker</span>
<svg class="b" style="left:420.8px;top:1087.3px;" width="23" height="23" viewBox="0 0 24 24" fill="#0b57d0"><path d="M7 10l5 5 5-5z" /></svg>
<span class="t" style="left:468.6px;top:1091px;font-size:17.8px;color:#303134;letter-spacing:0.64px;-webkit-text-stroke:0.2px #303134;">Tasks</span>
<svg class="b" style="left:524.5px;top:1087.3px;" width="23" height="23" viewBox="0 0 24 24" fill="#444746"><path d="M7 10l5 5 5-5z" /></svg>
<svg class="b" style="left:1999.8px;top:1087.5px;" width="25" height="25" viewBox="0 0 24 24" fill="#444746"><path d="M15.41 7.41L14 6l-6 6 6 6 1.41-1.41L10.83 12z" /></svg>
<div class="b" style="left:1297.6px;top:83px;width:729.4px;height:970.100px;background:#fcfdfe;border:1.200px solid #dfe4ea;border-radius:23px;box-sizing:border-box"></div>
<svg class="b" style="left:1319.75px;top:105.65px;" width="27.5" height="27.5" viewBox="0 0 24 24" fill="#1f1f1f"><path d="M12 1C13.200 6.200 17.800 10.800 23 12 17.800 13.200 13.200 17.800 12 23 10.800 17.800 6.200 13.200 1 12 6.200 10.800 10.800 6.200 12 1Z" /></svg>
<span class="t" style="left:1358.92px;top:109px;font-size:21.4px;color:#1f1f1f;letter-spacing:0.01px;-webkit-text-stroke:0.3px #1f1f1f;">Gemini</span>
<div class="b" style="left:1886.700px;top:109.3px;width:5px;height:5px;border-radius:50%;background:#1f1f1f"></div>
<div class="b" style="left:1886.700px;top:116.9px;width:5px;height:5px;border-radius:50%;background:#1f1f1f"></div>
<div class="b" style="left:1886.700px;top:124.5px;width:5px;height:5px;border-radius:50%;background:#1f1f1f"></div>
<svg class="b" style="left:1924.75px;top:104.15px;" width="30.5" height="30.5" viewBox="0 0 24 24" fill="#1f1f1f"><path d="M11 13v6H9v-4H5v-2h6zm4-8v4h4v2h-6V5h2z" /></svg>
<svg class="b" style="left:1975.1px;top:103.9px;" width="31" height="31" viewBox="0 0 24 24" fill="#1f1f1f"><path d="M19 6.41L17.59 5 12 10.59 6.41 5 5 6.41 10.59 12 5 17.59 6.41 19 12 13.41 17.59 19 19 17.59 13.41 12z" /></svg>
<div class="b" style="left:1318.700px;top:164.800px;width:30px;height:30px;border-radius:50%;background:#4e342e;box-shadow:0 0 0 1px #8d7b77 inset"></div>
<span class="t" style="left:1327.65px;top:172px;font-size:16.5px;color:#fff;-webkit-text-stroke:0.25px #fff;">F</span>
<svg class="b" style="left:1974.8px;top:168.2px;" width="24" height="24" viewBox="0 0 24 24" fill="#8f9499"><path d="M14.06 9.02l.92.92L5.92 19H5v-.92l9.06-9.06M17.66 3c-.25 0-.51.1-.7.29l-1.83 1.83 3.75 3.75 1.83-1.83c.39-.39.39-1.02 0-1.41l-2.34-2.34c-.2-.2-.45-.29-.71-.29zm-3.6 3.19L3 17.25V21h3.75L17.81 9.94l-3.75-3.75z" /></svg>
<span class="t" style="left:1317.81px;top:210px;font-size:17.6px;color:#1f1f1f;letter-spacing:0.33px;">Create a formula that calculates the total &#x27;Budgeted Hours&#x27; for tasks that are &#x27;In</span>
<span class="t" style="left:1317.26px;top:235px;font-size:17.6px;color:#1f1f1f;letter-spacing:0.27px;">Progress&#x27; and have a &#x27;Due Date&#x27; within the next 30 days, grouped by &#x27;Workstream&#x27;</span>
<span class="t" style="left:1317.95px;top:260px;font-size:17.6px;color:#1f1f1f;letter-spacing:0.24px;">and &#x27;Lead&#x27;. Explain how the formula works</span>
<svg class="b" style="left:1320.05px;top:313.65px;" width="27.5" height="27.5" viewBox="0 0 24 24" fill="#1f6df2"><path d="M12 1C13.200 6.200 17.800 10.800 23 12 17.800 13.200 13.200 17.800 12 23 10.800 17.800 6.200 13.200 1 12 6.200 10.800 10.800 6.200 12 1Z" /></svg>
<span class="t" style="left:1359.38px;top:320px;font-size:14.4px;color:#1f1f1f;letter-spacing:0.28px;-webkit-text-stroke:0.4px #1f1f1f;">Just a sec...</span>
<div class="b" style="left:1318.6px;top:353.1px;width:687.8px;height:14.7px;border-radius:5.500px;background:linear-gradient(90deg,#d6dbfa 0%,#d2dbfa 35%,#c6ddfb 70%,#c3defc 100%);"></div>
<div class="b" style="left:1318.6px;top:378.3px;width:584.4px;height:14.7px;border-radius:5.500px;background:linear-gradient(90deg,#d6dbfa 0%,#d2dbfa 35%,#c6ddfb 70%,#c3defc 100%);"></div>
<div class="b" style="left:1318.6px;top:403.5px;width:447.4px;height:14.9px;border-radius:5.500px;background:linear-gradient(90deg,#d6dbfa 0%,#d2dbfa 35%,#c6ddfb 70%,#c3defc 100%);"></div>
<span class="t" style="left:1318.6px;top:448px;font-size:17.8px;color:#7b80d4;letter-spacing:0.05px;-webkit-text-stroke:0.2px #7b80d4;">Tip: Type @ to reference your Workspace files</span>
<div class="b" style="left:1297.6px;top:893.500px;width:729.4px;height:159.600px;background:#fcfdfe;border:1.200px solid #dfe4ea;border-radius:23px;box-sizing:border-box"></div>
<div class="b" style="left:1316.700px;top:913.600px;width:690.700px;height:78.400px;border:1.300px solid #3c4043;border-radius:39.200px;box-sizing:border-box"></div>
<div class="b" style="left:1343.6px;top:940px;width:1.4px;height:26px;background:#1a2a8a;"></div>
<span class="t" style="left:1343.13px;top:943px;font-size:20.3px;color:#3c4043;letter-spacing:0.25px;-webkit-text-stroke:0.15px #3c4043;">Enter a prompt here</span>
<span class="t" style="left:1387.96px;top:1014px;font-size:14.8px;color:#5f6368;letter-spacing:0.05px;">Gemini in Workspace can make mistakes, so double-check responses.</span>
<span class="t" style="left:1858.09px;top:1014px;font-size:14.8px;color:#1f1f1f;letter-spacing:0.24px;">Learn more</span>
<div class="b" style="left:1859.3px;top:1029.2px;width:76px;height:1.1px;background:#1f1f1f;"></div>
<div class="b" style="left:0px;top:1117.6px;width:2048px;height:1.4px;background:#cfd2d6;"></div>
<div class="b" style="left:0px;top:0px;width:2048px;height:1.2px;background:#dcdfe3;"></div>
<div class="b" style="left:0px;top:0px;width:1px;height:1119px;background:#e3e6ea;"></div>
<svg class="b" style="left:0;top:1108px" width="11" height="11" viewBox="0 0 14 14"><path d="M0 0C0 8 6 14 14 14H0z" fill="#1a1a1a"/></svg>
<svg class="b" style="left:2037px;top:1108px" width="11" height="11" viewBox="0 0 14 14"><path d="M14 0C14 8 8 14 0 14h14z" fill="#1a1a1a"/></svg>
</div>
</body></html>
